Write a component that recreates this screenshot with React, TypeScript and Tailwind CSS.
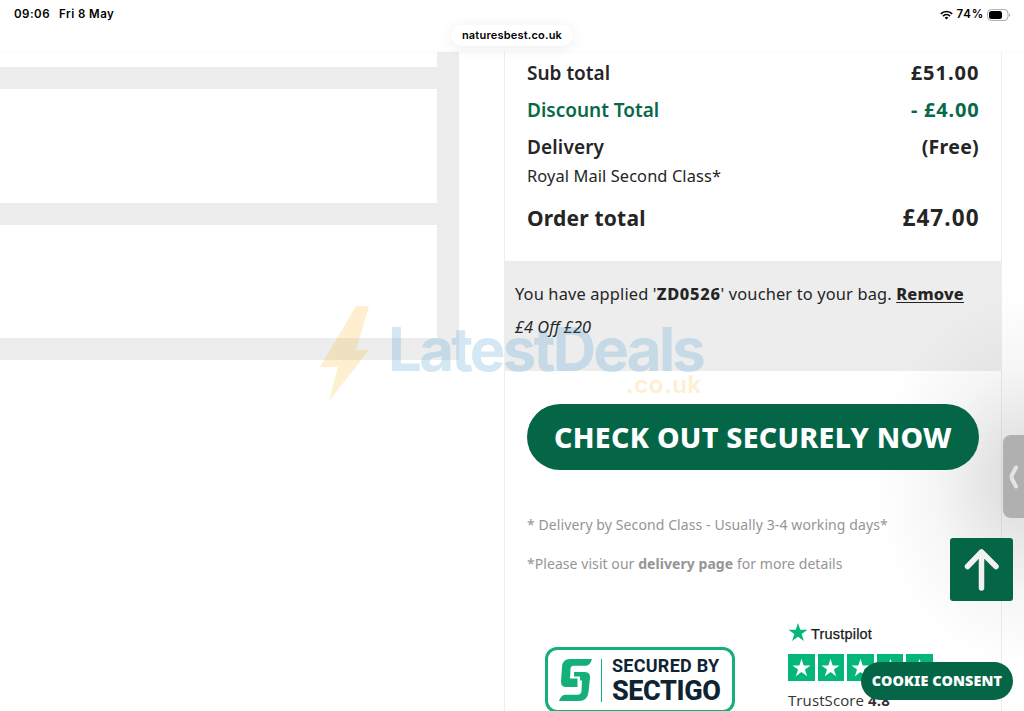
import type { ReactNode } from "react";

function Row({ label, value, className = "" }: { label: ReactNode; value: ReactNode; className?: string }) {
  return (
    <div className={`flex items-center justify-between whitespace-nowrap ${className}`}>
      <span>{label}</span>
      {value}
    </div>
  );
}

const STAR = "M12 1.500l2.500 7.600h8l-6.500 4.700 2.500 7.700-6.500-4.700-6.500 4.700L8 13.800 1.500 9.100h8z";

function StatusBar() {
  return (
    <div className="flex h-7 items-center justify-between pl-[14px] pr-[13px] pt-px font-[Inter,sans-serif] text-[11.5px] font-semibold text-black">
      <div className="flex gap-[9px]">
        <span className="tracking-[0.5px]">09:06</span>
        <span className="tracking-[0.45px]">Fri 8 May</span>
      </div>
      <div className="flex items-center">
        <svg className="mr-[3px] h-[10px] w-[13px]" viewBox="0 0 13 10" fill="none" stroke="#000" strokeWidth="1.7">
          <path d="M.8 3.800a8.200 8.200 0 0 1 11.400 0M3 6.100a5 5 0 0 1 7 0" />
          <path d="M4.700 7.700a2.600 2.600 0 0 1 3.600 0L6.500 9.600z" fill="#000" stroke="none" />
        </svg>
        <span className="tracking-[0.8px]">74%</span>
        <svg className="ml-[3px] h-3 w-6" viewBox="0 0 24 12">
          <rect x=".5" y=".4" width="20.5" height="11.2" rx="4" fill="none" stroke="#aaa" />
          <rect x="2" y="2" width="13" height="8" rx="2.5" />
          <path d="M22.200 4.200q2 1.800 0 3.600z" fill="#999" />
        </svg>
      </div>
    </div>
  );
}

function Watermark() {
  return (
    <div className="pointer-events-none absolute left-[320px] top-[306px] flex h-24 w-[386px] opacity-20">
      <svg className="h-24 w-[50px] shrink-0" viewBox="0 0 50 96">
        <path d="M36 0h13L36 44h13L9 95l9-34H0z" fill="#f9b514" />
      </svg>
      <div className="ml-[18px] font-[Inter,sans-serif] font-bold leading-none">
        <div className="mt-[13px] h-[51px] whitespace-nowrap text-[60px] leading-[60px] tracking-[-2.8px] text-[#2b8fcb]">LatestDeals</div>
        <div className="mt-[3px] pl-[238px] text-[24px] font-semibold tracking-[0.6px] text-[#f9b514]">.co.uk</div>
      </div>
    </div>
  );
}

function Sectigo() {
  return (
    <div className="flex h-[66px] w-[190px] items-center rounded-xl border-[3.500px] border-[#15b079] bg-white pl-[11px]">
      <svg className="h-[42px] w-[33px] shrink-0" viewBox="0 0 33 42">
        <path d="M33 0H11Q3.500 0 3 8L2 22q-.3 6 5 6h11.500v-8.500H11L11.500 10q.2-3.300 3.500-3.300h12Q31 6.700 33 0z" fill="#15b079" />
        <path d="M0 42H20Q28.500 42 29.500 33L31 19q.5-6-5-6H15v4.500h6v4h2L22.500 32q-.3 3.700-4 3.700H6Q2 36 0 42z" fill="#15b079" />
      </svg>
      <div className="ml-[9px] h-[43px] w-px shrink-0 bg-[#15b079]" />
      <div className="ml-[10px] whitespace-nowrap font-[Roboto,sans-serif] font-bold text-[#0e2433]">
        <div className="text-[18px] leading-[18px] tracking-[0.25px]">SECURED BY</div>
        <div className="mt-[4px] text-[27px] font-extrabold leading-[24px] tracking-[-0.4px]">SECTIGO</div>
      </div>
    </div>
  );
}

function Trustpilot() {
  return (
    <div className="flex w-[150px] flex-col">
      <div className="flex h-[22px] items-center">
        <svg className="-mt-1 h-[20px] w-5" viewBox="1 1 22 21"><path d={STAR} fill="#04b67a" /></svg>
        <span className="ml-[3px] pt-[2px] font-['Liberation_Sans',sans-serif] text-[14.5px] tracking-[0.2px] text-[#191919] [-webkit-text-stroke:0.25px_#191919]">Trustpilot</span>
      </div>
      <div className="mt-[9px] flex gap-[3px]">
        {[0, 1, 2, 3, 4].map((i) => (
          <div key={i} className="flex h-[27px] w-[26.6px] items-center justify-center bg-[#04b67a]">
            <svg className="h-[19px] w-[19px]" viewBox="1 1 22 21"><path d={STAR} fill="#fff" /></svg>
          </div>
        ))}
      </div>
      <div className="mt-[8px] whitespace-nowrap font-['Open_Sans',sans-serif] text-[15px] leading-[22px] tracking-[0.1px] text-[#333]">
        TrustScore <b>4.8</b>
      </div>
    </div>
  );
}

export default function App() {
  return (
    <div className="relative flex h-[711px] w-[1024px] flex-col overflow-hidden bg-white font-['Noto_Sans',sans-serif] text-[#252525]">
      <header className="h-[52px] shrink-0 border-b border-[#fafafa]">
        <StatusBar />
        <div className="relative mx-auto -mt-[3px] flex h-[21px] w-[122px] items-center justify-center rounded-full bg-white font-[Inter,sans-serif] text-[11px] font-semibold tracking-[0.2px] text-black shadow-[0_2px_14px_rgba(0,0,0,0.08)]">
          naturesbest.co.uk
        </div>
      </header>
      <main className="flex min-h-0 flex-1 items-start">
        <div className="flex h-[308px] w-[459px] shrink-0 flex-col gap-[22px] bg-[#ededed] pr-[22px]">
          <div className="h-[15px] bg-white" />
          <div className="h-[114px] bg-white" />
          <div className="h-[113px] bg-white" />
        </div>
        <section className="ml-[45px] h-[659px] w-[498px] border-x border-[#eeeeee]">
          <div className="h-[209px] px-[22px] pt-[3px]">
            <Row className="h-[37px] text-[19px] font-semibold" label="Sub total" value={<span className="-mr-[0.5px] -mt-[2px] text-[20px] font-bold tracking-[1px]">£51.00</span>} />
            <Row className="h-[37px] text-[19px] font-semibold text-[#08694a]" label="Discount Total" value={<span className="-mr-[0.5px] -mt-[2px] text-[20px] font-bold tracking-[0.8px]">- £4.00</span>} />
            <Row className="h-[37px] text-[19px] font-semibold" label={<span className="tracking-[0.15px]">Delivery</span>} value={<span className="-mt-px text-[19.500px] font-bold tracking-[0.3px]">(Free)</span>} />
            <div className="h-[20px] text-[16.400px] leading-[20px] tracking-[0.1px]">Royal Mail Second Class*</div>
            <Row className="mt-[14px] h-[38px] text-[21px] font-bold tracking-[0.2px]" label="Order total" value={<span className="-mr-[0.7px] -mt-[3px] text-[22.500px] font-bold tracking-[1.1px]">£47.00</span>} />
          </div>
          <div className="h-[110px] bg-[#ededed] pl-[10px] pt-[16px] text-[16.400px] leading-[33px]">
            <div className="whitespace-nowrap tracking-[0.15px]">
              You have applied '<b className="font-extrabold tracking-[0.7px]">ZD0526</b>' voucher to your bag.{" "}
              <b className="font-extrabold tracking-[0.2px] underline underline-offset-2">Remove</b>
            </div>
            <div className="italic">£4 Off £20</div>
          </div>
          <div className="px-[22px] pt-[33px]">
            <div className="relative z-10 flex h-[66px] w-[452px] items-center justify-center whitespace-nowrap rounded-full bg-[#056647] text-[28.500px] font-extrabold tracking-[0.3px] text-white">
              CHECK OUT SECURELY NOW
            </div>
            <div className="mt-[45px] whitespace-nowrap text-[14px] leading-[20px] text-[#959595]">
              <div className="tracking-[0.1px]">* Delivery by Second Class - Usually 3-4 working days*</div>
              <div className="mt-[19px] tracking-[0.06px]">*Please visit our <b>delivery page</b> for more details</div>
            </div>
            <div className="mt-[49px] flex items-start">
              <div className="ml-[18px] mt-[24px]"><Sectigo /></div>
              <div className="ml-[53px]"><Trustpilot /></div>
            </div>
          </div>
        </section>
      </main>
      <Watermark />
      <div className="pointer-events-none absolute right-0 top-[270px] h-[420px] w-[190px] bg-[radial-gradient(ellipse_150px_190px_at_100%_50%,rgba(0,0,0,0.14),rgba(0,0,0,0.10)_25%,rgba(0,0,0,0.035)_60%,transparent)]" />
      <div className="absolute left-[1003px] top-[435px] flex h-[83px] w-[21px] items-center justify-center rounded-l-lg bg-[#b0b0b0]">
        <svg className="h-6 w-3" viewBox="0 0 12 24" fill="none" stroke="#e4e4e4" strokeWidth="4" strokeLinecap="round" strokeLinejoin="round"><path d="M8 2.500L4 10q-.8 2 0 4l4 7.500" /></svg>
      </div>
      <div className="absolute left-[950px] top-[538px] flex h-[63px] w-[63px] items-center justify-center rounded-[3px] bg-[#056647]">
        <svg className="h-[42px] w-[36px]" viewBox="0 0 36 42" fill="none" stroke="#f1f1f1" strokeWidth="5.5" strokeLinecap="round" strokeLinejoin="round"><path d="M17.500 39V3M3.500 17.500L17.500 3l14.500 14.500" /></svg>
      </div>
      <div className="absolute left-[861px] top-[662px] z-20 flex h-[38px] w-[152px] items-center justify-center whitespace-nowrap rounded-full bg-[#056647] text-[14.300px] font-black tracking-[0.15px] text-white">
        COOKIE CONSENT
      </div>
    </div>
  );
}
